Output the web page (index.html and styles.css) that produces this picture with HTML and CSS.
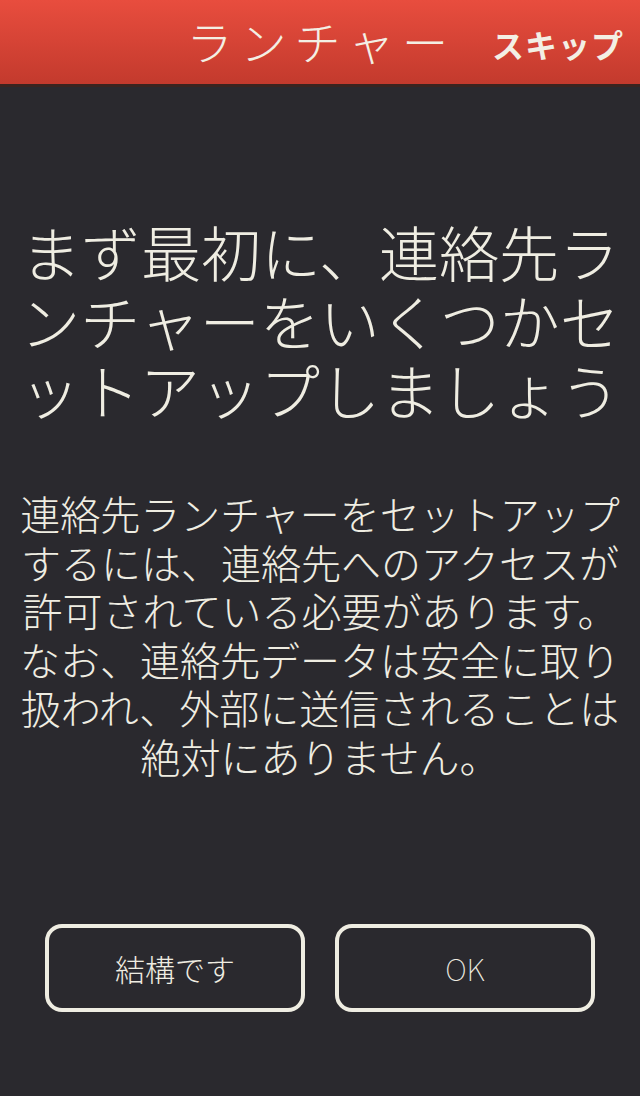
FILE: index.html
```html
<!DOCTYPE html>
<html lang="ja">
<head>
    <meta charset="UTF-8">
    <meta name="viewport" content="width=device-width, initial-scale=1.0">
    <title>ランチャー</title>
    <link rel="stylesheet" href="styles.css">
</head>
<body>
    <header class="top-bar">
        <h1 class="top-title">ランチャー</h1>
        <a class="skip-link" href="#">スキップ</a>
    </header>

    <main class="intro">
        <h2 class="intro-title">まず最初に、連絡先ランチャーをいくつかセットアップしましょう</h2>
        <p class="intro-text">連絡先ランチャーをセットアップするには、連絡先へのアクセスが許可されている必要があります。なお、連絡先データは安全に取り扱われ、外部に送信されることは絶対にありません。</p>
    </main>

    <div class="actions">
        <button class="btn" id="declineBtn">結構です</button>
        <button class="btn btn-ok" id="okBtn">OK</button>
    </div>
</body>
</html>
```

FILE: styles.css
```css
body {
    margin: 0;
    background-color: #2a292e;
    color: #efede2;
    font-family: "Noto Sans CJK JP", "Noto Sans", sans-serif;
    width: 640px;
    height: 1096px;
    overflow: hidden;
}
.top-bar {
    height: 84px;
    background: linear-gradient(#e84d3e, #c33a2d);
    border-bottom: 3px solid #3a2420;
    display: flex;
    align-items: center;
    justify-content: flex-end;
    padding-right: 16px;
}
.top-title {
    margin: 0 36px 4px 0;
    font-size: 46px;
    font-weight: 300;
    letter-spacing: 8px;
    color: #f3efe4;
}
.skip-link {
    font-size: 32px;
    font-weight: 700;
    color: #f3efe4;
    text-decoration: none;
    letter-spacing: 1px;
    margin-top: 4px;
}

.intro {
    padding: 129px 20px 0;
    text-align: center;
}
.intro-title {
    margin: 0;
    font-size: 60px;
    font-weight: 300;
    line-height: 69px;
}
.intro-text {
    margin: 66px 0 0;
    font-size: 40px;
    font-weight: 300;
    line-height: 48.5px;
}

.actions {
    display: flex;
    gap: 30px;
    padding: 0 45px;
    margin-top: 144px;
}
.btn {
    flex: 1;
    height: 88px;
    background: transparent;
    border: 4px solid #efede2;
    border-radius: 17px;
    color: #efede2;
    font-family: "Noto Sans CJK JP", "Noto Sans", sans-serif;
    font-size: 30px;
    font-weight: 300;
    cursor: pointer;
}
.btn-ok {
    font-weight: 100;
}
```
